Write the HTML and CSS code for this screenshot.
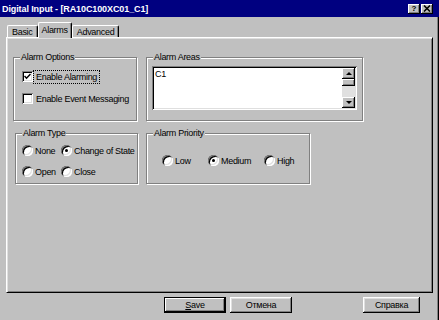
FILE: index.html
```html
<!DOCTYPE html>
<html>

<head>
  <title>Digital Input - [RA10C100XC01_C1]</title>
  <link rel="stylesheet" href="styles.css">
</head>

<body>
  <div class="dialog">
    <div class="titlebar">
      <span class="title">Digital Input - [RA10C100XC01_C1]</span>
      <div class="caption-buttons">
        <span class="cap-btn help">?</span>
        <span class="cap-btn close">
          <svg width="8" height="7" viewBox="0 0 8 7">
            <path d="M1 0.5 L7 6.5 M7 0.5 L1 6.5" stroke="#000" stroke-width="1.6" fill="none" />
          </svg>
        </span>
      </div>
    </div>

    <div class="tabs">
      <span class="tab">Basic</span>
      <span class="tab active">Alarms</span>
      <span class="tab">Advanced</span>
    </div>

    <div class="panel">
      <div class="row">
        <div class="group options">
          <span class="legend">Alarm Options</span>
          <label class="check-row">
            <span class="checkbox">
              <svg width="7" height="7" viewBox="0 0 7 7">
                <path d="M0.5 3 L2.5 5.2 L6.5 1" stroke="#000" stroke-width="1.5" fill="none" />
              </svg>
            </span>
            <span class="text focus">Enable Alarming</span>
          </label>
          <label class="check-row">
            <span class="checkbox"></span>
            <span class="text">Enable Event Messaging</span>
          </label>
        </div>

        <div class="group areas">
          <span class="legend">Alarm Areas</span>
          <div class="listbox">
            <div class="list-items">C1</div>
            <div class="scrollbar">
              <span class="sb-btn"><span class="arrow up"></span></span>
              <span class="sb-thumb"></span>
              <span class="sb-track"></span>
              <span class="sb-btn"><span class="arrow down"></span></span>
            </div>
          </div>
        </div>
      </div>

      <div class="row second">
        <div class="group type">
          <span class="legend">Alarm Type</span>
          <div class="radio-grid">
            <label class="radio-item"><span class="radio"></span>None</label>
            <label class="radio-item"><span class="radio on"></span>Change of State</label>
            <label class="radio-item"><span class="radio"></span>Open</label>
            <label class="radio-item"><span class="radio"></span>Close</label>
          </div>
        </div>

        <div class="group priority">
          <span class="legend">Alarm Priority</span>
          <div class="radio-line">
            <label class="radio-item low"><span class="radio"></span>Low</label>
            <label class="radio-item medium"><span class="radio on"></span>Medium</label>
            <label class="radio-item"><span class="radio"></span>High</label>
          </div>
        </div>
      </div>
    </div>

    <div class="footer">
      <button type="button" class="btn default"><u>S</u>ave</button>
      <button type="button" class="btn">Отмена</button>
      <button type="button" class="btn help-btn">Справка</button>
    </div>
  </div>
</body>

</html>
```

FILE: styles.css
```css
body {
  margin: 0;
  background-color: #c0c0c0;
  font-family: "Liberation Sans", Arial, sans-serif;
  font-size: 9px;
  letter-spacing: -0.3px;
  color: #000;
}

.dialog {
  width: 439px;
  height: 320px;
  display: flex;
  flex-direction: column;
  background-color: #c0c0c0;
  box-shadow: inset -1px 0 #000, inset -2px 0 #808080;
}

/* title bar */

.titlebar {
  height: 17px;
  display: flex;
  align-items: center;
  justify-content: space-between;
  padding: 0 6px 0 2px;
  background-color: #000080;
}

.title {
  color: #fff;
  font-weight: bold;
  letter-spacing: -0.1px;
}

.caption-buttons {
  display: flex;
}

.cap-btn {
  width: 12px;
  height: 10px;
  display: flex;
  align-items: center;
  justify-content: center;
  background-color: #c0c0c0;
  box-shadow: inset -1px -1px #000, inset 1px 1px #fff, inset -2px -2px #808080;
  font-weight: bold;
  font-size: 8px;
  letter-spacing: 0;
}

.cap-btn.close {
  margin-left: 1px;
}

/* tabs */

.tabs {
  height: 20px;
  display: flex;
  align-items: flex-end;
  padding-left: 7px;
}

.tab {
  height: 12px;
  display: flex;
  align-items: center;
  padding: 0 4px;
  box-sizing: border-box;
  border: 1px solid #fff;
  border-right-color: #000;
  border-bottom: none;
  border-radius: 2px 2px 0 0;
  box-shadow: inset -1px 0 #808080;
}

.tab.active {
  position: relative;
  z-index: 1;
  height: 16px;
  margin-bottom: -1px;
  padding: 0 3px 2px;
  background-color: #c0c0c0;
}

/* panel */

.panel {
  height: 256px;
  margin: 0 6px;
  padding: 19px 0 0 6px;
  box-sizing: border-box;
  border: 1px solid #fff;
  border-right-color: #000;
  border-bottom-color: #000;
  box-shadow: inset 1px 1px #dfdfdf, inset -1px -1px #808080;
}

.row {
  display: flex;
  gap: 9px;
}

.row.second {
  margin-top: 12px;
  padding-left: 2px;
  gap: 8px;
}

.group {
  position: relative;
  box-sizing: border-box;
  border: 1px solid #808080;
  box-shadow: 1px 1px 0 #fff, inset 1px 1px 0 #fff;
}

.legend {
  position: absolute;
  top: -6px;
  left: 6px;
  padding: 0 1px;
  line-height: 11px;
  background-color: #c0c0c0;
}

.options {
  width: 124px;
  height: 64px;
  padding: 12px 0 0 8px;
  display: flex;
  flex-direction: column;
  gap: 9px;
}

.areas {
  width: 217px;
  height: 64px;
  padding: 8px 0 0 5px;
}

.type {
  width: 123px;
  height: 51px;
  padding: 10px 0 0 6px;
}

.priority {
  width: 164px;
  height: 51px;
  padding: 20px 0 0 15px;
}

/* checkboxes */

.check-row {
  height: 13px;
  display: flex;
  align-items: center;
}

.checkbox {
  width: 11px;
  height: 11px;
  display: flex;
  align-items: center;
  justify-content: center;
  background-color: #fff;
  box-shadow: inset 1px 1px #808080, inset -1px -1px #fff, inset 2px 2px #000, inset -2px -2px #dfdfdf;
}

.check-row .text {
  margin-left: 1px;
  padding: 0 2px;
  line-height: 12px;
}

.text.focus {
  outline: 1px dotted #000;
}

/* radios */

.radio-grid {
  display: grid;
  grid-template-columns: 39px auto;
  row-gap: 8px;
}

.radio-line {
  display: flex;
}

.radio-item {
  height: 13px;
  display: flex;
  align-items: center;
  gap: 2px;
}

.radio-item.low {
  width: 46px;
}

.radio-item.medium {
  width: 56px;
}

.radio {
  position: relative;
  width: 11px;
  height: 11px;
  border-radius: 50%;
  background-color: #fff;
  box-shadow: inset 1px 1px #808080, inset -1px -1px #fff, inset 2px 2px #000, inset -2px -2px #dfdfdf;
}

.radio.on::after {
  content: "";
  position: absolute;
  top: 4px;
  left: 4px;
  width: 3px;
  height: 3px;
  border-radius: 50%;
  background-color: #000;
}

/* list box */

.listbox {
  width: 205px;
  height: 44px;
  display: flex;
  padding: 2px;
  box-sizing: border-box;
  background-color: #fff;
  box-shadow: inset 1px 1px #808080, inset -1px -1px #fff, inset 2px 2px #000, inset -2px -2px #dfdfdf;
}

.list-items {
  flex: 1;
  padding: 1px;
  line-height: 11px;
}

.scrollbar {
  width: 13px;
  display: flex;
  flex-direction: column;
}

.sb-btn,
.sb-thumb {
  display: flex;
  align-items: center;
  justify-content: center;
  background-color: #c0c0c0;
  box-shadow: inset -1px -1px #000, inset 1px 1px #fff, inset -2px -2px #808080;
}

.sb-btn {
  height: 11px;
}

.sb-thumb {
  height: 7px;
}

.sb-track {
  flex: 1;
  background-color: #e0e0e0;
}

.arrow {
  width: 0;
  height: 0;
  border-left: 3px solid transparent;
  border-right: 3px solid transparent;
}

.arrow.up {
  border-bottom: 3px solid #000;
}

.arrow.down {
  border-top: 3px solid #000;
}

/* footer buttons */

.footer {
  display: flex;
  gap: 4px;
  margin-top: 4px;
  padding: 0 19px 0 164px;
}

.btn {
  width: 62px;
  height: 16px;
  padding: 0;
  font-family: inherit;
  font-size: 9px;
  letter-spacing: -0.3px;
  color: #000;
  background-color: #c0c0c0;
  border: none;
  box-shadow: inset -1px -1px #000, inset 1px 1px #fff, inset -2px -2px #808080, inset 2px 2px #dfdfdf;
}

.btn.default {
  box-shadow: inset 0 0 0 1px #000, inset -2px -2px #000, inset 2px 2px #fff, inset -3px -3px #808080;
}

.btn.help-btn {
  width: 57px;
  margin-left: auto;
}
```
